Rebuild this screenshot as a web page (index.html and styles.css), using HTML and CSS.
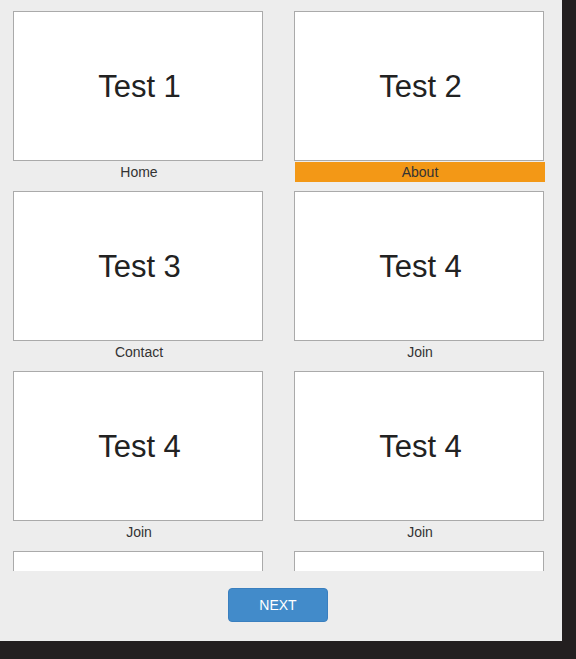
FILE: index.html
```html
<!DOCTYPE html>
<html>
<head>
<meta charset="utf-8">
<link rel="stylesheet" href="styles.css">
</head>
<body>
<div class="panel">
  <div class="scroll">
    <div class="grid">
      <div class="item"><div class="box">Test 1</div><div class="label">Home</div></div>
      <div class="item"><div class="box">Test 2</div><div class="label active">About</div></div>
      <div class="item"><div class="box">Test 3</div><div class="label">Contact</div></div>
      <div class="item"><div class="box">Test 4</div><div class="label">Join</div></div>
      <div class="item"><div class="box">Test 4</div><div class="label">Join</div></div>
      <div class="item"><div class="box">Test 4</div><div class="label">Join</div></div>
      <div class="item"><div class="box"></div></div>
      <div class="item"><div class="box"></div></div>
    </div>
  </div>
  <div class="footer">
    <button class="next">NEXT</button>
  </div>
</div>
</body>
</html>
```

FILE: styles.css
```css
html, body {
  margin: 0;
  padding: 0;
}
body {
  background: #231f20;
  width: 576px;
  height: 659px;
  overflow: hidden;
  font-family: "Liberation Sans", Arial, sans-serif;
}
.panel {
  width: 562px;
  height: 641px;
  background: #ededed;
  display: flex;
  flex-direction: column;
}
.scroll {
  height: 560px;
  overflow: hidden;
  padding: 11px 0 0 13px;
  flex: none;
}
.grid {
  display: grid;
  grid-template-columns: 251px 251px;
  column-gap: 30px;
}
.box {
  box-sizing: border-box;
  width: 250px;
  height: 150px;
  padding: 2px 0 0 3px;
  background: #fff;
  border: 1px solid #aaaaaa;
  display: flex;
  align-items: center;
  justify-content: center;
  font-size: 31px;
  color: #222;
}
.label {
  width: 250px;
  height: 20px;
  margin: 1px 0 9px 1px;
  line-height: 20px;
  font-size: 14px;
  text-align: center;
  color: #333;
}
.label.active {
  background: #f39816;
}
.footer {
  display: flex;
  justify-content: center;
  padding: 17px 6px 0 0;
}
.next {
  width: 100px;
  height: 34px;
  background: #428bca;
  border: 1px solid #3a7fbf;
  border-radius: 4px;
  color: #fff;
  font-family: "Liberation Sans", Arial, sans-serif;
  font-size: 14px;
  padding: 0;
}
```
